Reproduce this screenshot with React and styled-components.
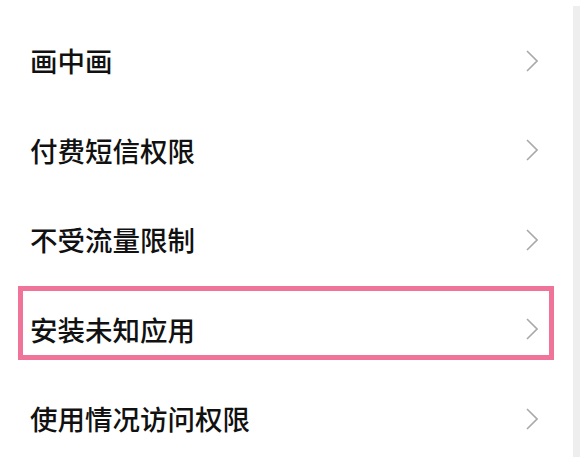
import styled, { createGlobalStyle } from 'styled-components';

const GlobalStyle = createGlobalStyle`
    html, body {
        margin: 0;
        padding: 0;
        background: #ffffff;
    }
`

const StyledPage = styled.div`
    width: 580px;
    height: 457px;
    display: flex;
    overflow: hidden;
    background: #ffffff;
    font-family: 'Noto Sans CJK SC', 'Noto Sans', sans-serif;
`
const StyledList = styled.ul`
    flex: 1;
    list-style: none;
    margin: 0;
    padding: 16px 0 0 0;
`
const StyledScrollEdge = styled.div`
    width: 7px;
    margin-top: 6px;
    background: #eeeeee;
`
const StyledRow = styled.li`
    position: relative;
    height: 89.5px;
    display: flex;
    align-items: center;
    justify-content: space-between;
    padding: 0 35px 0 30px;
    box-sizing: border-box;
`
const StyledLabel = styled.span`
    font-size: 27.5px;
    font-weight: 500;
    color: #111111;
    line-height: 1;
`
const StyledHighlight = styled.div`
    position: absolute;
    left: 18px;
    top: 1px;
    width: 536px;
    height: 74px;
    box-sizing: border-box;
    border: 5px solid #f0739a;
    pointer-events: none;
`

const items = [
    { label: '画中画' },
    { label: '付费短信权限' },
    { label: '不受流量限制' },
    { label: '安装未知应用', marked: true },
    { label: '使用情况访问权限' },
]

function Chevron() {
    return (
        <svg width="12" height="22" viewBox="0 0 12 22">
            <polyline points="1,1 11,11 1,21" fill="none" stroke="#a9a9a9" strokeWidth="1.6" />
        </svg>
    )
}

function App() {
    return (
        <StyledPage>
            <GlobalStyle />
            <StyledList>
                {items.map((item) => (
                    <StyledRow key={item.label}>
                        {item.marked && <StyledHighlight />}
                        <StyledLabel>{item.label}</StyledLabel>
                        <Chevron />
                    </StyledRow>
                ))}
            </StyledList>
            <StyledScrollEdge />
        </StyledPage>
    )
}

export default App
